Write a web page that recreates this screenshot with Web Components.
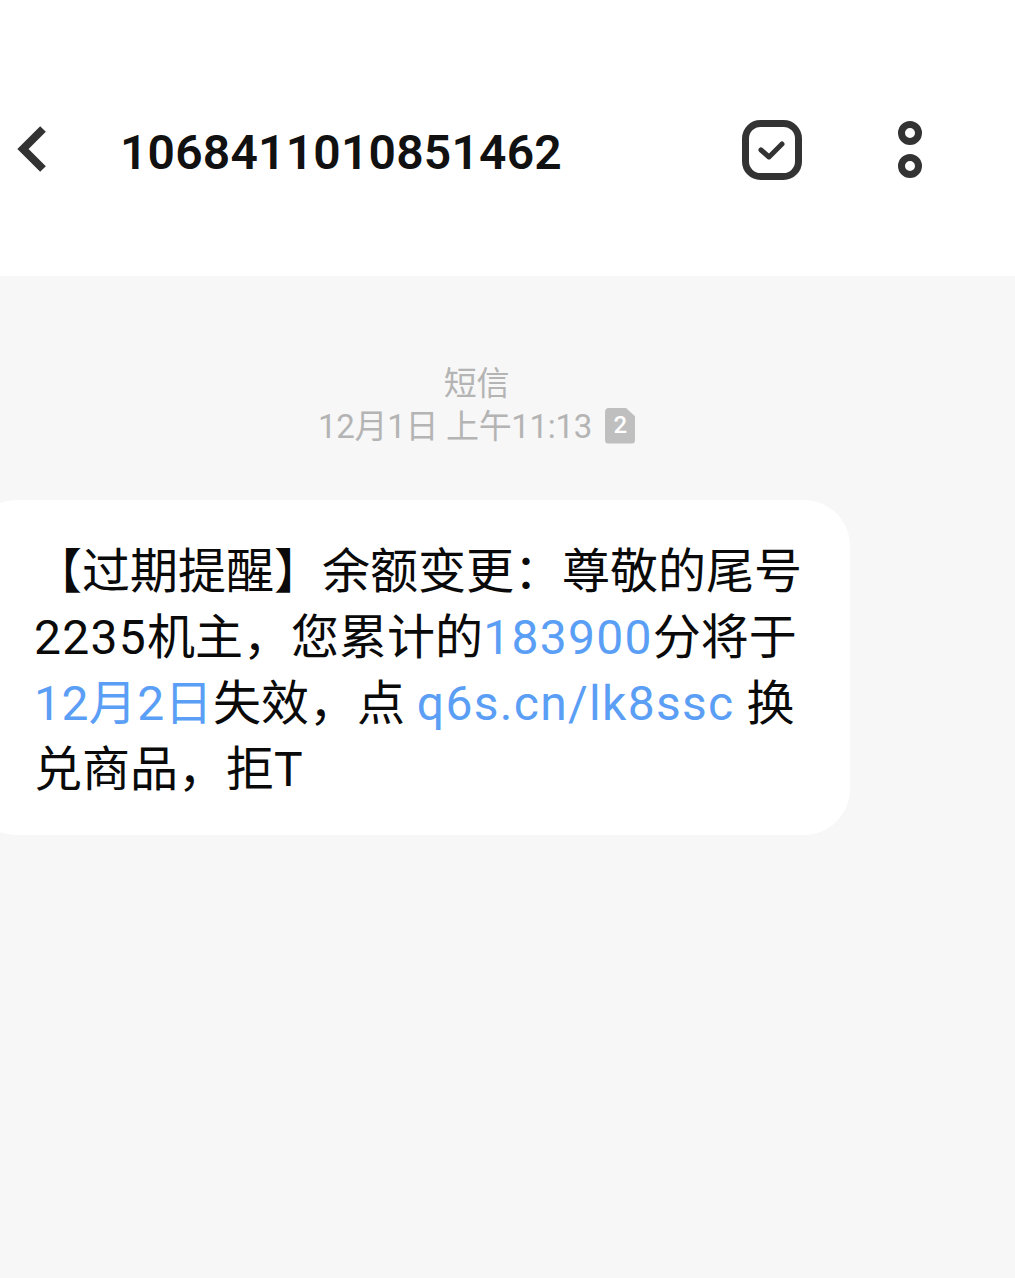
<!DOCTYPE html>
<html>
<head>
<meta charset="utf-8">
<style>
html, body { margin: 0; height: 100%; background: #f7f7f7; overflow-x: hidden; }
body { font-family: "Roboto", "Noto Sans CJK SC", sans-serif; }
</style>
</head>
<body>
<sms-header number="1068411010851462"></sms-header>
<sms-thread>
  <sms-stamp>
    <span slot="type">短信</span>
    <span slot="time">12月1日 上午11:13</span>
    <span slot="sim">2</span>
  </sms-stamp>
  <sms-bubble>【过期提醒】余额变更：尊敬的尾号<b>2235</b>机主，您累计的<a class="wide">183900</a>分将于<a>12月2日</a>失效，点 <a class="wide">q6s.cn/lk8ssc</a> 换兑商品，拒T</sms-bubble>
</sms-thread>
<script>
customElements.define('sms-header',
  class extends HTMLElement {
    constructor() {
      super()
      this.attachShadow({ mode: 'open' })
    }
    connectedCallback() {
      this.shadowRoot.innerHTML = `
<style>
:host { display: flex; align-items: center; height: 276px; padding-top: 26px; box-sizing: border-box; background: #fff; }
.back { width: 34px; height: 50px; margin: -4px 0 0 16px; flex: none; }
h1 { margin: 2px 0 0 70px; width: 622px; font: 600 48px "Roboto", sans-serif; letter-spacing: .2px; color: #111; }
.check { width: 60px; height: 60px; margin-top: -2px; flex: none; }
.more { width: 26px; height: 60px; margin: -2px 0 0 95px; flex: none; }
</style>
<svg class="back" viewBox="0 0 34 50"><path d="M27 5 L7 25 L27 45" fill="none" stroke="#333" stroke-width="8"/></svg>
<h1>${this.getAttribute('number')}</h1>
<svg class="check" viewBox="0 0 60 60"><rect x="3.5" y="3.5" width="53" height="53" rx="15" fill="none" stroke="#333" stroke-width="7"/><path d="M19 30 L27 37 L40 24" fill="none" stroke="#333" stroke-width="5" stroke-linecap="round" stroke-linejoin="round"/></svg>
<svg class="more" viewBox="0 0 26 60"><circle cx="13" cy="13" r="8.5" fill="none" stroke="#333" stroke-width="7"/><circle cx="13" cy="46" r="8.5" fill="none" stroke="#333" stroke-width="7"/></svg>`
    }
  }
)

customElements.define('sms-thread',
  class extends HTMLElement {
    constructor() {
      super()
      this.attachShadow({ mode: 'open' })
      this.shadowRoot.innerHTML = `
<style>
:host { display: block; padding-top: 86px; }
</style>
<slot></slot>`
    }
  }
)

customElements.define('sms-stamp',
  class extends HTMLElement {
    constructor() {
      super()
      this.attachShadow({ mode: 'open' })
      this.shadowRoot.innerHTML = `
<style>
:host { display: flex; flex-direction: column; align-items: center; font-size: 33px; line-height: 43px; color: #b4b4b4; margin-left: -62px; letter-spacing: -.3px; }
.row { display: flex; align-items: center; }
.sim { display: flex; align-items: center; justify-content: center; width: 30px; height: 36px; margin: -2px 0 0 13px; background: #bfbfbf; border-radius: 4px; color: #fff; font-size: 24px; font-weight: 500; clip-path: polygon(0 0, 68% 0, 100% 24%, 100% 100%, 0 100%); }
</style>
<div><slot name="type"></slot></div>
<div class="row"><slot name="time"></slot><div class="sim"><slot name="sim"></slot></div></div>`
    }
  }
)

customElements.define('sms-bubble',
  class extends HTMLElement {
    constructor() {
      super()
      this.attachShadow({ mode: 'open' })
      this.shadowRoot.innerHTML = `
<style>
:host { display: block; box-sizing: border-box; width: 880px; height: 335px; margin: 52px 0 0 -30px; padding: 39px 40px 0 64px; background: #fff; border-radius: 46px; font-size: 48px; line-height: 66px; color: #0a0a0a; }
::slotted(a) { color: #5a9ef5; letter-spacing: .4px; }
::slotted(a.wide), ::slotted(b) { font-weight: 400; letter-spacing: 1.3px; }
</style>
<slot></slot>`
    }
  }
)
</script>
</body>
</html>
